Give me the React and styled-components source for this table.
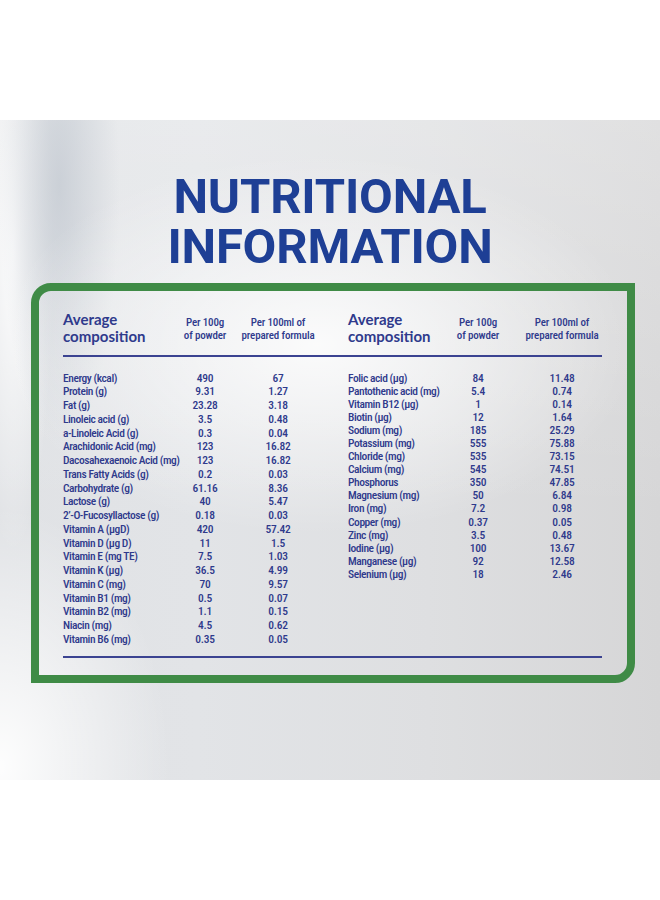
import React from "react"
import styled, { createGlobalStyle } from "styled-components"

const GlobalStyle = createGlobalStyle`
  body {
    margin: 0;
    background: #ffffff;
  }
`

const leftRows = [
  ["Energy (kcal)", "490", "67"],
  ["Protein (g)", "9.31", "1.27"],
  ["Fat (g)", "23.28", "3.18"],
  ["Linoleic acid (g)", "3.5", "0.48"],
  ["a-Linoleic Acid (g)", "0.3", "0.04"],
  ["Arachidonic Acid (mg)", "123", "16.82"],
  ["Dacosahexaenoic Acid (mg)", "123", "16.82"],
  ["Trans Fatty Acids (g)", "0.2", "0.03"],
  ["Carbohydrate (g)", "61.16", "8.36"],
  ["Lactose (g)", "40", "5.47"],
  ["2’-O-Fucosyllactose (g)", "0.18", "0.03"],
  ["Vitamin A (µgD)", "420", "57.42"],
  ["Vitamin D (µg D)", "11", "1.5"],
  ["Vitamin E (mg TE)", "7.5", "1.03"],
  ["Vitamin K (µg)", "36.5", "4.99"],
  ["Vitamin C (mg)", "70", "9.57"],
  ["Vitamin B1 (mg)", "0.5", "0.07"],
  ["Vitamin B2 (mg)", "1.1", "0.15"],
  ["Niacin (mg)", "4.5", "0.62"],
  ["Vitamin B6 (mg)", "0.35", "0.05"]
]

const rightRows = [
  ["Folic acid (µg)", "84", "11.48"],
  ["Pantothenic acid (mg)", "5.4", "0.74"],
  ["Vitamin B12 (µg)", "1", "0.14"],
  ["Biotin (µg)", "12", "1.64"],
  ["Sodium (mg)", "185", "25.29"],
  ["Potassium (mg)", "555", "75.88"],
  ["Chloride (mg)", "535", "73.15"],
  ["Calcium (mg)", "545", "74.51"],
  ["Phosphorus", "350", "47.85"],
  ["Magnesium (mg)", "50", "6.84"],
  ["Iron (mg)", "7.2", "0.98"],
  ["Copper (mg)", "0.37", "0.05"],
  ["Zinc (mg)", "3.5", "0.48"],
  ["Iodine (µg)", "100", "13.67"],
  ["Manganese (µg)", "92", "12.58"],
  ["Selenium (µg)", "18", "2.46"]
]

const LEFT_COLS = "110px 64px 82px"
const RIGHT_COLS = "102px 56px 112px"

function NutrientTable({ cols, lh, rows }) {
  return (
    <Body cols={cols} lh={lh}>
      {rows.map(([name, a, b]) => (
        <React.Fragment key={name}>
          <Name>{name}</Name>
          <Value>{a}</Value>
          <Value>{b}</Value>
        </React.Fragment>
      ))}
    </Body>
  )
}

function TableHead({ cols }) {
  return (
    <Head cols={cols}>
      <HeadLabel>
        Average
        <br />
        composition
      </HeadLabel>
      <HeadSub>
        Per 100g
        <br />
        of powder
      </HeadSub>
      <HeadSub>
        Per 100ml of
        <br />
        prepared formula
      </HeadSub>
    </Head>
  )
}

export default function App() {
  return (
    <Page>
      <GlobalStyle />
      <Banner>
        <Title>
          <TitleLine>NUTRITIONAL</TitleLine>
          <TitleLine>INFORMATION</TitleLine>
        </Title>
        <Card>
          <Halves>
            <TableHead cols={LEFT_COLS} />
            <TableHead cols={RIGHT_COLS} />
          </Halves>
          <Rule />
          <Halves>
            <NutrientTable cols={LEFT_COLS} lh={13.75} rows={leftRows} />
            <NutrientTable cols={RIGHT_COLS} lh={13.1} rows={rightRows} />
          </Halves>
          <Rule bottom />
        </Card>
      </Banner>
    </Page>
  )
}

const navy = "#2f3a8c"

const Page = styled.div`
  width: 660px;
  height: 900px;
  padding-top: 120px;
  box-sizing: border-box;
  background: #ffffff;
`

const Banner = styled.section`
  height: 660px;
  padding-top: 52px;
  box-sizing: border-box;
  background:
    radial-gradient(ellipse 320px 190px at 48% 34%, rgba(255, 255, 255, 0.85), rgba(255, 255, 255, 0) 100%),
    radial-gradient(ellipse 170px 260px at 0% 98%, rgba(255, 255, 255, 0.95), rgba(255, 255, 255, 0) 100%),
    radial-gradient(ellipse 60px 260px at 9% 10%, rgba(196, 202, 210, 0.8), rgba(196, 202, 210, 0) 100%),
    radial-gradient(ellipse 40px 300px at 2% 20%, rgba(255, 255, 255, 0.9), rgba(255, 255, 255, 0) 100%),
    linear-gradient(180deg, rgba(255, 255, 255, 0.25) 0%, rgba(255, 255, 255, 0) 60%),
    linear-gradient(90deg, #e0e2e5 0%, #e2e4e7 30%, #dedfe1 65%, #d6d6d7 100%);
`

const Title = styled.h1`
  margin: 0;
  display: flex;
  flex-direction: column;
  align-items: center;
  font-family: Roboto, "Liberation Sans", sans-serif;
  font-weight: 700;
  font-size: 49px;
  letter-spacing: -0.2px;
  color: #1e3f95;
`

const TitleLine = styled.span`
  display: block;
  height: 50px;
  line-height: 50px;
`

const Card = styled.div`
  width: 604px;
  height: 400px;
  margin: 11px 0 0 31px;
  box-sizing: border-box;
  border: 8px solid #3f8b46;
  border-radius: 20px 0 20px 0;
  padding: 20px 0 0 24px;
`

const Halves = styled.div`
  display: flex;
  gap: 29px;
  align-items: flex-start;
`

const Head = styled.div`
  display: grid;
  grid-template-columns: ${p => p.cols};
  align-items: center;
`

const HeadLabel = styled.div`
  font-family: Lato, "Open Sans", sans-serif;
  font-weight: 700;
  font-size: 15px;
  line-height: 17px;
  color: ${navy};
  white-space: nowrap;
`

const HeadSub = styled.div`
  font-family: "Roboto Condensed", Roboto, sans-serif;
  font-weight: 500;
  font-size: 11px;
  line-height: 12.5px;
  letter-spacing: -0.15px;
  text-align: center;
  color: ${navy};
  white-space: nowrap;
  padding-top: 3px;
`

const Rule = styled.div`
  width: 539px;
  height: 1.5px;
  background: #3b4391;
  margin: ${p => (p.bottom ? "9.5px 0 0" : "10px 0 15px")};
`

const Body = styled.div`
  display: grid;
  grid-template-columns: ${p => p.cols};
  grid-auto-rows: ${p => p.lh}px;
  align-items: center;
  font-family: "Roboto Condensed", Roboto, sans-serif;
  font-weight: 500;
  font-size: 11.5px;
  line-height: ${p => p.lh}px;
  color: ${navy};
`

const Name = styled.div`
  white-space: nowrap;
  letter-spacing: -0.45px;
`

const Value = styled.div`
  text-align: center;
  white-space: nowrap;
  letter-spacing: -0.2px;
`
